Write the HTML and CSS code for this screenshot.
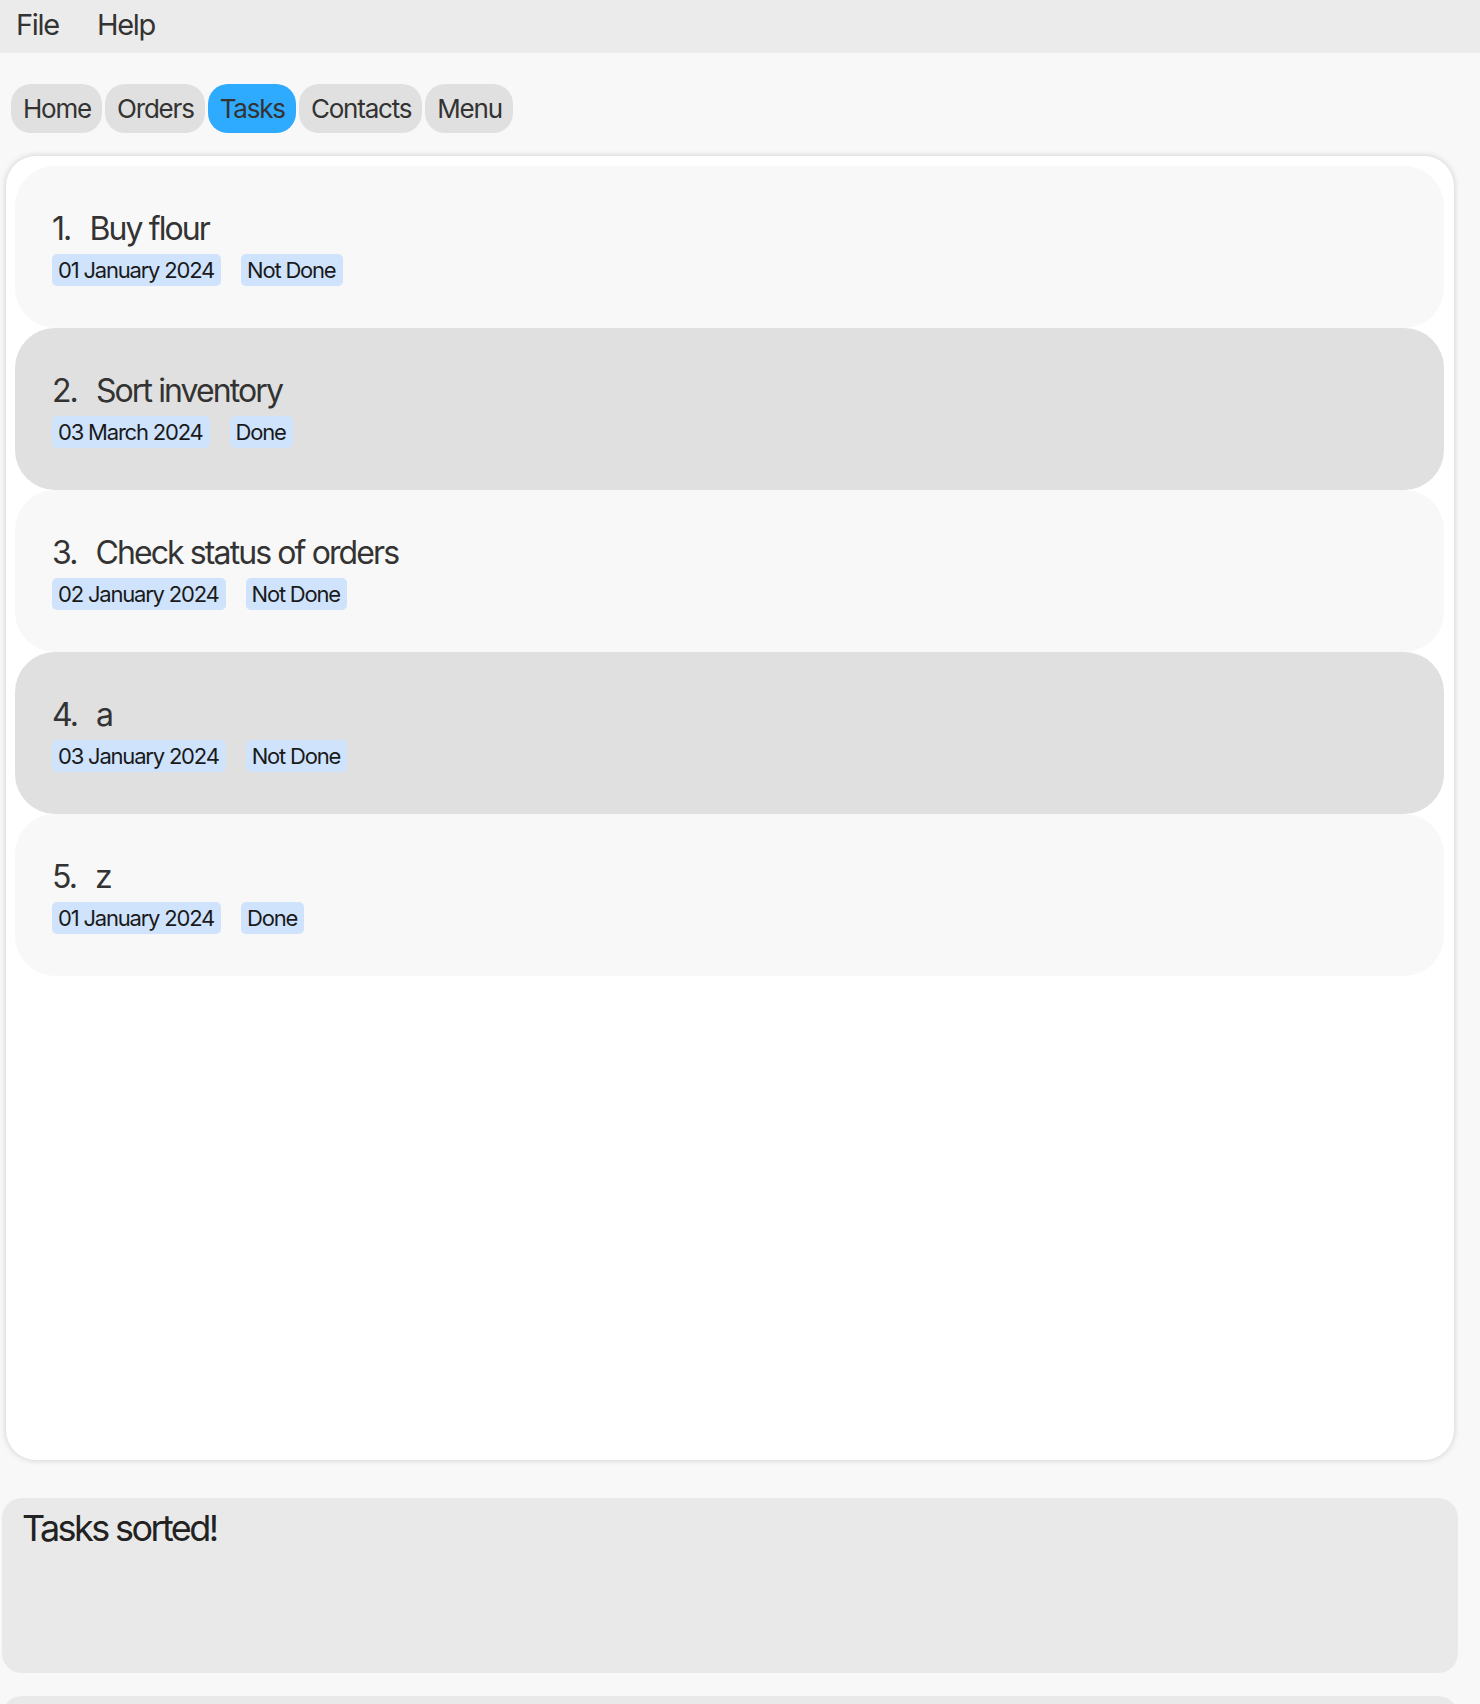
FILE: index.html
```html
<!DOCTYPE html>
<html lang="en">
<head>
<meta charset="utf-8">
<title>Tasks</title>
<link rel="stylesheet" href="styles.css">
</head>
<body>
<div class="menubar">
  <span class="menu-item">File</span>
  <span class="menu-item">Help</span>
</div>
<div class="main">
  <div class="tabs">
    <span class="tab">Home</span>
    <span class="tab">Orders</span>
    <span class="tab active">Tasks</span>
    <span class="tab">Contacts</span>
    <span class="tab">Menu</span>
  </div>
  <div class="panel">
    <div class="card odd">
      <div class="title"><span class="num">1.</span>Buy flour</div>
      <div class="tags"><span class="tag">01 January 2024</span><span class="tag">Not Done</span></div>
    </div>
    <div class="card even">
      <div class="title"><span class="num">2.</span>Sort inventory</div>
      <div class="tags"><span class="tag">03 March 2024</span><span class="tag">Done</span></div>
    </div>
    <div class="card odd">
      <div class="title"><span class="num">3.</span>Check status of orders</div>
      <div class="tags"><span class="tag">02 January 2024</span><span class="tag">Not Done</span></div>
    </div>
    <div class="card even">
      <div class="title"><span class="num">4.</span>a</div>
      <div class="tags"><span class="tag">03 January 2024</span><span class="tag">Not Done</span></div>
    </div>
    <div class="card odd">
      <div class="title"><span class="num">5.</span>z</div>
      <div class="tags"><span class="tag">01 January 2024</span><span class="tag">Done</span></div>
    </div>
  </div>
  <div class="status">Tasks sorted!</div>
  <div class="input-box"></div>
</div>
</body>
</html>
```
FILE: styles.css
```css
html, body {
  margin: 0;
  padding: 0;
}
body {
  background: #f8f8f8;
  font-family: "Inter", "Liberation Sans", sans-serif;
  color: #333333;
  overflow: hidden;
  height: 1704px;
}
.menubar {
  height: 53px;
  box-sizing: border-box;
  padding: 0 0 4px 16px;
  background: #ebebeb;
  display: flex;
  align-items: center;
  gap: 38px;
}
.menu-item {
  font-size: 29px;
  letter-spacing: -1.3px;
  line-height: 40px;
  color: #333333;
}
.main {
  padding: 31px 0 0 0;
}
.tabs {
  display: flex;
  gap: 3px;
  margin-left: 11px;
  height: 49px;
}
.tab {
  background: #e0e0e0;
  border-radius: 20px;
  font-size: 26px;
  letter-spacing: -1.2px;
  line-height: 49px;
  padding: 0 11px 0 12px;
  color: #333333;
}
.tab.active {
  background: #2eaaff;
}
.panel {
  margin: 23px 0 0 6px;
  width: 1448px;
  height: 1304px;
  box-sizing: border-box;
  background: #ffffff;
  border-radius: 30px;
  box-shadow: 0 0 6px rgba(0, 0, 0, 0.18);
  padding: 10px 10px 0 9px;
  display: flex;
  flex-direction: column;
}
.card {
  height: 162px;
  box-sizing: border-box;
  padding: 43px 0 0 37px;
  border-radius: 40px;
}
.card.odd {
  background: #f8f8f8;
}
.card.even {
  background: #e0e0e0;
}
.title {
  font-size: 32px;
  letter-spacing: -1.9px;
  line-height: 40px;
  color: #333333;
}
.num {
  margin-right: 19px;
}
.tags {
  display: flex;
  gap: 20px;
  margin-top: 5px;
}
.tag {
  background: #cfe3fd;
  border-radius: 5px;
  font-size: 22px;
  letter-spacing: -1.2px;
  line-height: 32px;
  padding: 0 7px 0 6px;
  color: #1a1a1a;
}
.status {
  margin: 38px 0 0 2px;
  width: 1456px;
  height: 175px;
  box-sizing: border-box;
  background: #e9e9e9;
  border-radius: 20px;
  padding: 8px 0 0 20px;
  font-size: 36px;
  letter-spacing: -2.6px;
  line-height: 44px;
  color: #222222;
}
.input-box {
  margin: 23px 0 0 2px;
  width: 1456px;
  height: 60px;
  background: #e9e9e9;
  border-radius: 20px;
}
```
